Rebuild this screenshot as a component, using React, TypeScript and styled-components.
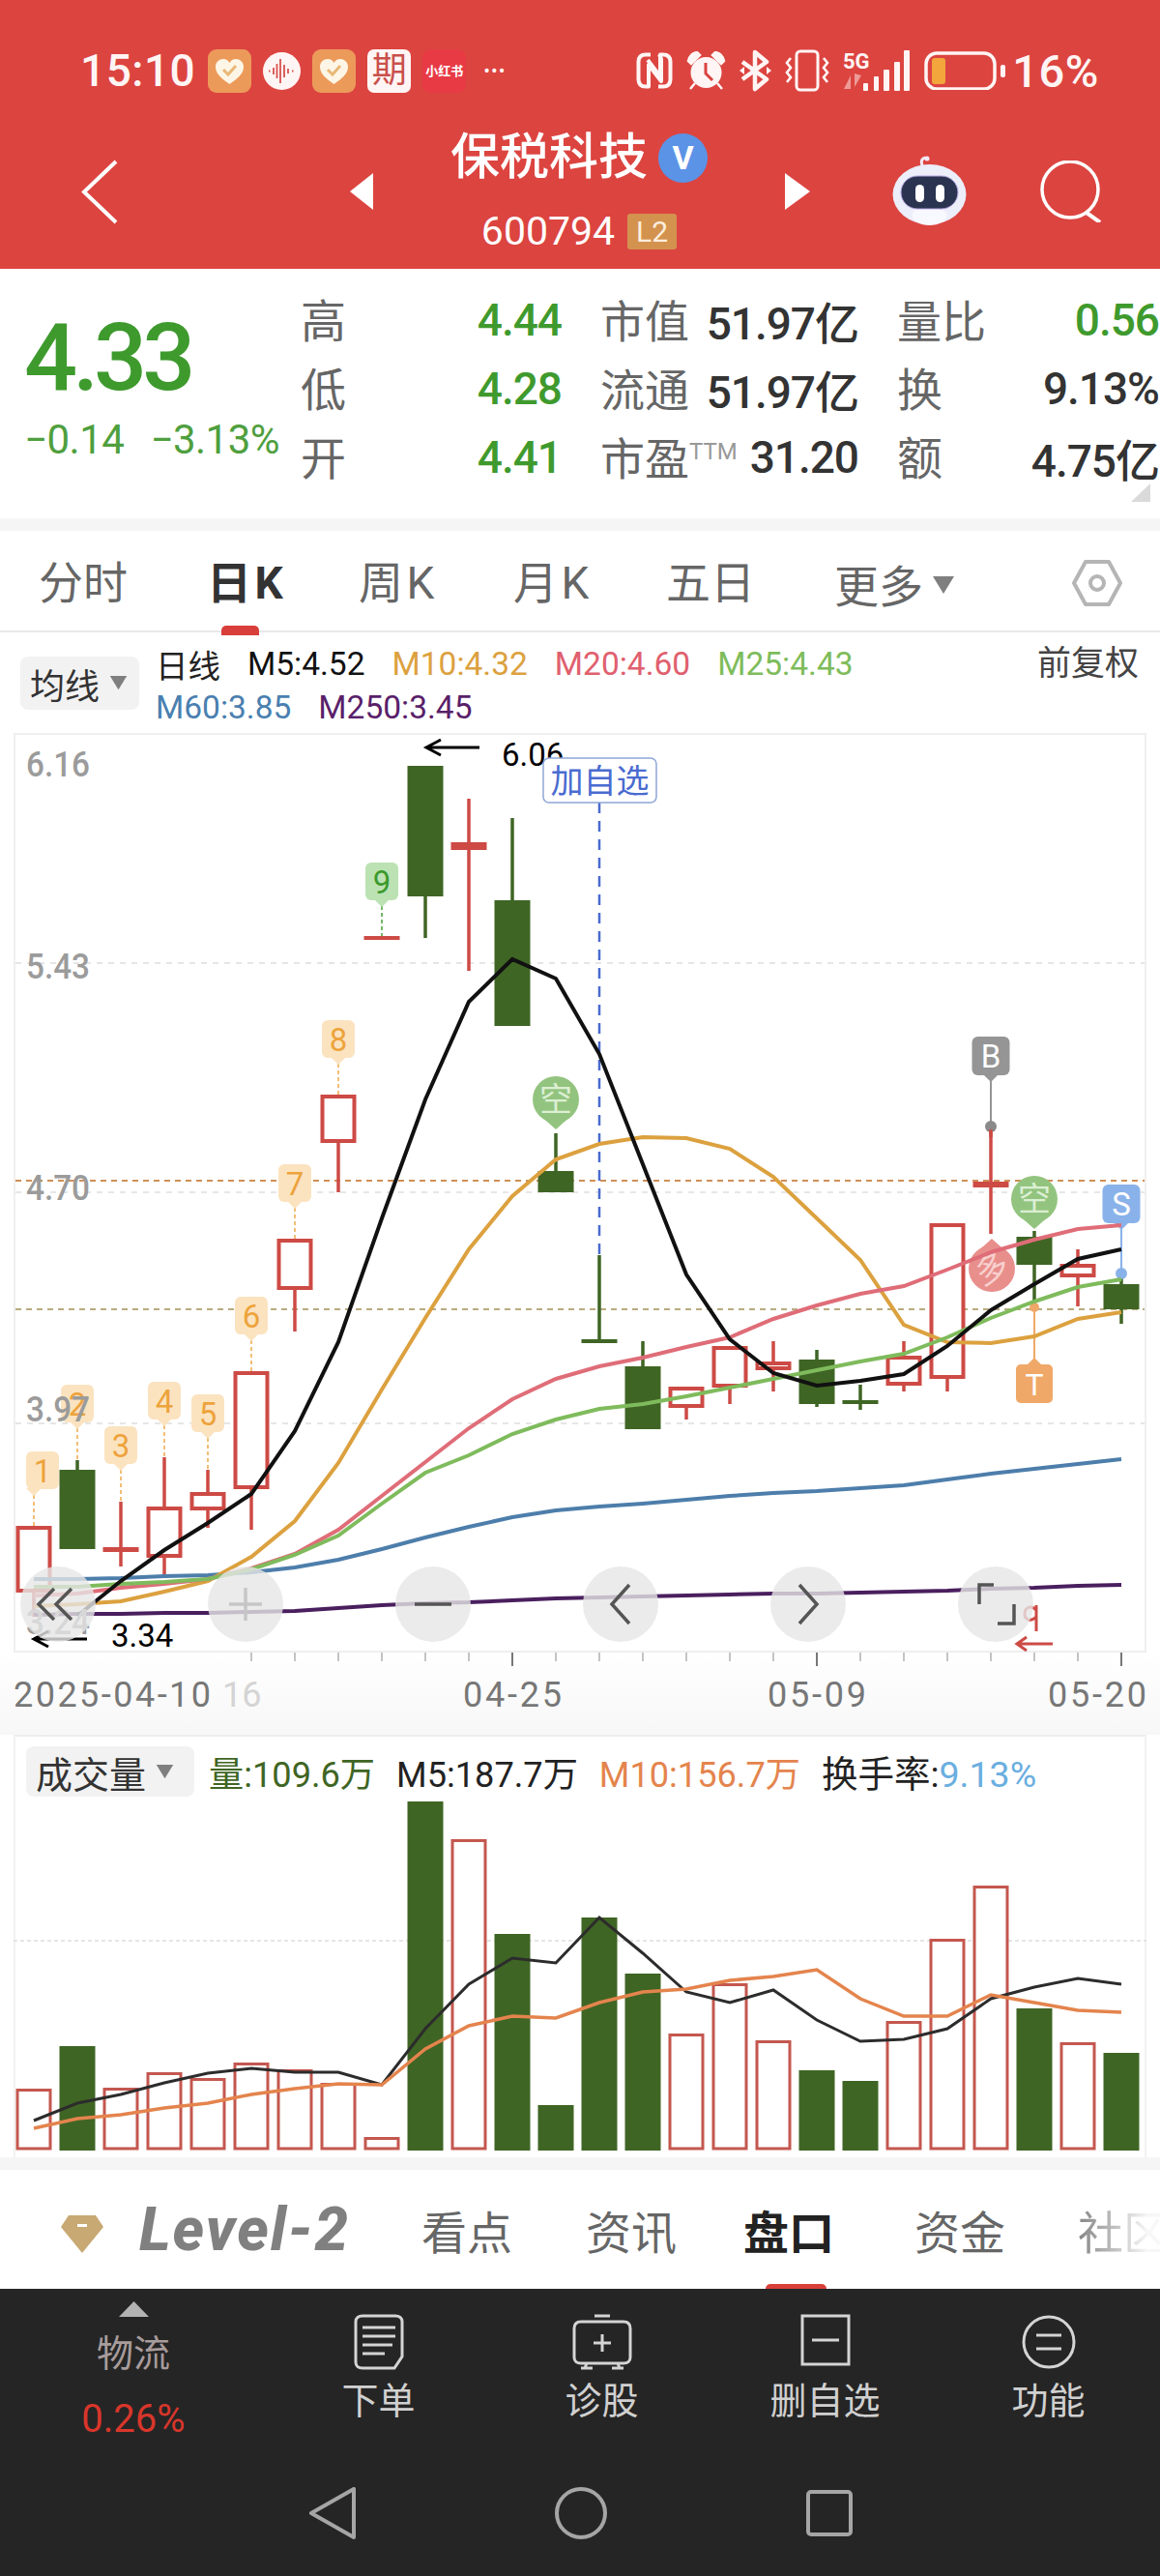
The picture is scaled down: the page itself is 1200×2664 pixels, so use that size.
import styled, { createGlobalStyle } from 'styled-components';

const GlobalStyle = createGlobalStyle`
  html, body { margin: 0; padding: 0; background: #fff; }
  body { font-family: Roboto, "Noto Sans CJK SC", sans-serif; }
  * { box-sizing: border-box; }
`;

const RED = '#cd4a45';
const GREEN = '#3f6524';
const TAG_FONT = 'Roboto, "Noto Sans CJK SC", sans-serif';

const xAt = (i: number) => 35 + 45 * i;
const toPoints = (ys: number[], from = 0) => ys.map((y, i) => `${xAt(i)},${y}`).slice(from).join(' ');

// top, bottom, high, low, rising
const candles: [number, number, number, number, boolean][] = [
  [1578, 1647, 1578, 1672, true],
  [1520, 1602, 1510, 1602, false],
  [1600, 1605, 1553, 1620, true],
  [1558, 1611, 1507, 1630, true],
  [1543, 1562, 1520, 1580, true],
  [1418, 1540, 1418, 1582, true],
  [1281, 1334, 1281, 1377, true],
  [1132, 1182, 1132, 1233, true],
  [968, 972, 968, 972, true],
  [792, 927, 792, 970, false],
  [871, 879, 826, 1004, true],
  [931, 1061, 846, 1061, false],
  [1211, 1233, 1172, 1233, false],
  [1385, 1389, 1298, 1389, false],
  [1413, 1478, 1387, 1478, false],
  [1434, 1456, 1434, 1468, true],
  [1392, 1435, 1392, 1452, true],
  [1408, 1417, 1387, 1439, true],
  [1406, 1452, 1396, 1455, false],
  [1448, 1452, 1432, 1458, false],
  [1402, 1433, 1387, 1439, true],
  [1265, 1426, 1265, 1439, true],
  [1222, 1228, 1165, 1276, true],
  [1279, 1308, 1273, 1352, false],
  [1307, 1321, 1292, 1351, true],
  [1328, 1354, 1318, 1369, false],
];

const ma5 = [1688, 1671, 1635, 1603, 1575, 1545, 1480, 1388, 1260, 1137, 1036, 992, 1012, 1090, 1204, 1318, 1385, 1420, 1433, 1428, 1421, 1392, 1355, 1328, 1302, 1292];
const ma10 = [1661, 1659, 1656, 1646, 1635, 1610, 1573, 1513, 1437, 1363, 1292, 1237, 1199, 1183, 1176, 1177, 1188, 1217, 1260, 1303, 1370, 1388, 1389, 1382, 1364, 1357];
const ma20 = [1650, 1648, 1642, 1638, 1633, 1622, 1607, 1582, 1547, 1512, 1477, 1447, 1426, 1413, 1404, 1393, 1383, 1364, 1350, 1338, 1330, 1313, 1295, 1282, 1271, 1267];
const ma25 = [1641, 1641, 1638, 1636, 1633, 1623, 1608, 1588, 1555, 1523, 1505, 1483, 1468, 1457, 1452, 1444, 1435, 1426, 1417, 1408, 1400, 1383, 1363, 1346, 1331, 1323];
const ma60 = [1633, 1633, 1632, 1630, 1629, 1626, 1621, 1613, 1602, 1590, 1579, 1569, 1562, 1558, 1555, 1551, 1547, 1544, 1542, 1539, 1536, 1530, 1524, 1519, 1514, 1509];
const ma250 = [1670, 1669, 1669, 1668, 1668, 1667, 1666, 1663, 1660, 1658, 1657, 1655, 1653, 1652, 1651, 1650, 1649, 1648, 1648, 1647, 1646, 1645, 1643, 1642, 1640, 1639];

const volTops = [2162, 2118, 2161, 2145, 2151, 2135, 2142, 2156, 2212, 1865, 1904, 2002, 2179, 1985, 2043, 2105, 2053, 2112, 2143, 2154, 2092, 2007, 1952, 2079, 2114, 2125];
const volM5 = [2195, 2177, 2168, 2156, 2146, 2141, 2145, 2145, 2158, 2100, 2054, 2027, 2032, 1985, 2022, 2062, 2073, 2060, 2091, 2113, 2111, 2100, 2069, 2057, 2048, 2054];
const volM10 = [2203, 2193, 2189, 2182, 2177, 2168, 2162, 2157, 2158, 2121, 2097, 2087, 2089, 2073, 2062, 2059, 2050, 2046, 2039, 2069, 2087, 2087, 2065, 2073, 2081, 2083];

// x of the marker tip, bubble centre, top of bubble, bottom of dashed stem
const orangeTags: [string, number, number, number, number][] = [
  ['1', 35, 44, 1501, 1578],
  ['2', 80, 80, 1432, 1510],
  ['3', 125, 125, 1475, 1553],
  ['4', 170, 170, 1429, 1507],
  ['5', 215, 215, 1442, 1520],
  ['6', 260, 260, 1341, 1418],
  ['7', 305, 305, 1204, 1281],
  ['8', 350, 350, 1055, 1132],
];

const Tag = ({ label, tip, cx, top, stem, bg, fg, w = 34, h = 39, solid = false }: { label: string; tip: number; cx: number; top: number; stem: number; bg: string; fg: string; w?: number; h?: number; solid?: boolean }) => (
  <g>
    <line x1={tip} x2={tip} y1={top + h + 6} y2={stem} stroke={solid ? bg : fg} strokeWidth={solid ? 2 : 1.4} strokeDasharray={solid ? undefined : '4 3'} />
    <rect x={cx - w / 2} y={top} width={w} height={h} rx={6} fill={bg} />
    <polygon points={`${tip - 8},${top + h - 1} ${tip + 8},${top + h - 1} ${tip},${top + h + 7}`} fill={bg} />
    <text x={cx} y={top + h / 2 + 12} textAnchor="middle" fontFamily={TAG_FONT} fontSize={33} fill={fg}>{label}</text>
  </g>
);

const Pin = ({ cx, cy, label, bg, fg, down = true, tilt = 0 }: { cx: number; cy: number; label: string; bg: string; fg: string; down?: boolean; tilt?: number }) => (
  <g>
    <polygon points={down ? `${cx - 18},${cy + 15} ${cx + 18},${cy + 15} ${cx},${cy + 31}` : `${cx - 18},${cy - 15} ${cx + 18},${cy - 15} ${cx},${cy - 31}`} fill={bg} />
    <circle cx={cx} cy={cy} r={24} fill={bg} />
    <text x={cx} y={cy + 12} textAnchor="middle" fontFamily={TAG_FONT} fontSize={34} fill={fg} transform={tilt ? `rotate(${tilt} ${cx} ${cy})` : undefined}>{label}</text>
  </g>
);

const AxisLabel = ({ y, children }: { y: number; children: string }) => (
  <text x={27} y={y} fontFamily={TAG_FONT} fontSize={36} fontWeight={500} fill="#9b9b9b" textLength={66} lengthAdjust="spacingAndGlyphs">{children}</text>
);

const CandleChart = () => (
  <ChartSvg viewBox="16 760 1168 947" width={1168} height={947}>
    {[996, 1233, 1472].map(y => (
      <line key={y} x1={16} x2={1184} y1={y} y2={y} stroke="#e6e6e6" strokeWidth={2} strokeDasharray="6 6" />
    ))}
    <line x1={16} x2={1184} y1={1221} y2={1221} stroke="#cf8f58" strokeWidth={2} strokeDasharray="6 5" />
    <line x1={16} x2={1184} y1={1354} y2={1354} stroke="#b9ab80" strokeWidth={2} strokeDasharray="6 5" />

    <line x1={620} x2={620} y1={830} y2={1298} stroke="#4a6bd0" strokeWidth={2.5} strokeDasharray="11 8" />

    {orangeTags.map(([label, tip, cx, top, stem]) => (
      <Tag key={label} label={label} tip={tip} cx={cx} top={top} stem={stem} bg="#fbe3c0" fg="#eda33c" />
    ))}
    <Tag label="9" tip={395} cx={395} top={892} stem={968} bg="#bce2b4" fg="#3c9a2c" />

    <Pin cx={1026} cy={1312} label="多" bg="#e88f8c" fg="#f8d0ce" down={false} tilt={-25} />

    {candles.map(([top, bot, hi, lo, up], i) => {
      const x = xAt(i);
      const color = up ? RED : GREEN;
      const doji = bot - top < 7;
      return (
        <g key={i}>
          <line x1={x} x2={x} y1={hi} y2={lo} stroke={color} strokeWidth={3.5} />
          {up && !doji ? (
            <rect x={x - 16.5} y={top + 2} width={33} height={Math.max(bot - top - 4, 1)} fill="#fff" stroke={color} strokeWidth={4} />
          ) : (
            <rect x={x - 18.5} y={top} width={37} height={bot - top} fill={color} />
          )}
        </g>
      );
    })}
    <rect x={483} y={875} width={4} height={4} fill={RED} />

    <Pin cx={575} cy={1137} label="空" bg="#93c47f" fg="#dcefd4" />
    <Pin cx={1070} cy={1240} label="空" bg="#93c47f" fg="#dcefd4" />

    <Tag label="B" tip={1025} cx={1025} top={1072} stem={1165} bg="#959595" fg="#fff" w={39} h={40} solid />
    <circle cx={1025} cy={1165} r={6} fill="#8a8a8a" />
    <line x1={1025} x2={1025} y1={1168} y2={1176} stroke={RED} strokeWidth={3.5} />

    <Tag label="S" tip={1160} cx={1160} top={1225} stem={1317} bg="#8ab2ea" fg="#fff" w={39} h={40} solid />
    <circle cx={1160} cy={1317} r={6} fill="#8ab2ea" />

    <line x1={1070} x2={1070} y1={1352} y2={1408} stroke="#f0a868" strokeWidth={2} />
    <circle cx={1070} cy={1352} r={5} fill="#f0a868" />
    <polygon points="1062,1412 1078,1412 1070,1404" fill="#f0a868" />
    <rect x={1051} y={1411} width={38} height={40} rx={5} fill="#f0a868" />
    <text x={1070} y={1443} textAnchor="middle" fontFamily={TAG_FONT} fontSize={32} fill="#fff">T</text>

    <polyline points={toPoints(ma250)} fill="none" stroke="#4a1f5e" strokeWidth={4} />
    <polyline points={toPoints(ma60)} fill="none" stroke="#4d7eab" strokeWidth={4} />
    <polyline points={toPoints(ma10)} fill="none" stroke="#dca13f" strokeWidth={4} />
    <polyline points={toPoints(ma20)} fill="none" stroke="#df6d78" strokeWidth={4} />
    <polyline points={toPoints(ma25)} fill="none" stroke="#7fbb5c" strokeWidth={4} />
    <polyline points={toPoints(ma5, 1)} fill="none" stroke="#111" strokeWidth={4} />

    <AxisLabel y={803}>6.16</AxisLabel>
    <AxisLabel y={1012}>5.43</AxisLabel>
    <AxisLabel y={1241}>4.70</AxisLabel>
    <AxisLabel y={1470}>3.97</AxisLabel>
    <AxisLabel y={1690}>3.24</AxisLabel>

    {/* high / low markers */}
    <path d="M496 773H442M456 765L441 773L456 781" fill="none" stroke="#000" strokeWidth={3} />
    <text x={519} y={792} fontFamily={TAG_FONT} fontSize={33} fill="#000">6.06</text>
    <path d="M90 1695H36M50 1687L35 1695L50 1703" fill="none" stroke="#000" strokeWidth={3} />
    <text x={115} y={1703} fontFamily={TAG_FONT} fontSize={33} fill="#000">3.34</text>

    {/* add-to-watchlist flag */}
    <rect x={562} y={784} width={117} height={46} rx={6} fill="#fff" stroke="#8fa6d8" strokeWidth={1.5} />
    <text x={620.5} y={820} textAnchor="middle" fontFamily={TAG_FONT} fontSize={34} fill="#4a6bd0">加自选</text>

    <path d="M1072 1660V1687M1072 1665C1066 1659 1060 1663 1060 1669C1060 1675 1066 1678 1072 1672" fill="none" stroke={RED} strokeWidth={3} />
    <path d="M1089 1700H1053M1062 1693L1052 1700L1062 1707" fill="none" stroke={RED} strokeWidth={3} />
  </ChartSvg>
);

const DateAxis = () => (
  <AxisSvg viewBox="0 1711 1200 85" width={1200} height={85}>
    {candles.map((_, i) =>
      i >= 5 ? (
        <line key={i} x1={xAt(i)} x2={xAt(i)} y1={1711} y2={[11, 18, 25].includes(i) ? 1725 : 1720} stroke={[11, 18, 25].includes(i) ? '#777' : '#c4c4c4'} strokeWidth={2} />
      ) : null
    )}
    <text x={14} y={1767} fontFamily={TAG_FONT} fontSize={36} fill="#777" textLength={204}>2025-04-10</text>
    <text x={230} y={1767} fontFamily={TAG_FONT} fontSize={36} fill="#d4d4d4">16</text>
    <text x={479} y={1767} fontFamily={TAG_FONT} fontSize={36} fill="#777" textLength={102}>04-25</text>
    <text x={794} y={1767} fontFamily={TAG_FONT} fontSize={36} fill="#777" textLength={102}>05-09</text>
    <text x={1084} y={1767} fontFamily={TAG_FONT} fontSize={36} fill="#777" textLength={102}>05-20</text>
  </AxisSvg>
);

const VolumeChart = () => (
  <VolumeSvg viewBox="14 1860 1172 371" width={1172} height={371}>
    <line x1={14} x2={1186} y1={2009} y2={2009} stroke="#dedede" strokeWidth={1.5} strokeDasharray="4 3" />
    {volTops.map((top, i) => {
      const up = candles[i][4];
      const x = xAt(i);
      return up ? (
        <rect key={i} x={x - 17} y={top + 1.5} width={34} height={2224 - top - 1.5} fill="#fff" stroke="#c4574f" strokeWidth={3} />
      ) : (
        <rect key={i} x={x - 18.5} y={top} width={37} height={2226 - top} fill={GREEN} />
      );
    })}
    <polyline points={toPoints(volM5)} fill="none" stroke="#2c2c2c" strokeWidth={3} />
    <polyline points={toPoints(volM10)} fill="none" stroke="#e4844d" strokeWidth={3.5} />
  </VolumeSvg>
);

const HeartIcon = () => (
  <svg width={45} height={45} viewBox="0 0 45 45">
    <rect width={45} height={45} rx={9} fill="#ec9a5a" />
    <path d="M22.5 36C14 30 8 25 8 18C8 13 12 10 16 10C19 10 21 11.500 22.500 14C24 11.500 26 10 29 10C33 10 37 13 37 18C37 25 31 30 22.500 36Z" fill="#fdf6e6" />
    <path d="M16 21L21 26L29 17" fill="none" stroke="#e9b877" strokeWidth={3} />
  </svg>
);

const WaveIcon = () => (
  <svg width={39} height={39} viewBox="0 0 39 39">
    <circle cx={19.500} cy={19.500} r={19.500} fill="#fff5f4" />
    <path d="M6 19.500H7.500M11 16V23M14.500 12V27M18 7V32M22 13V26M26 17V22M30 19.500H31.500" stroke="#d9534f" strokeWidth={1.8} />
  </svg>
);

const NfcIcon = () => (
  <svg width={38} height={38} viewBox="0 0 38 38">
    <path d="M15 2.500H10C5 2.500 2.500 5 2.500 10V28C2.500 33 5 35.500 10 35.500H13V13L26 30V7L24 2.500M23 35.500H28C33 35.500 35.500 33 35.500 28V10C35.500 5 33 2.500 28 2.500H25V25L12 8" fill="none" stroke="#fff5f4" strokeWidth={4} strokeLinejoin="round" />
  </svg>
);

const AlarmIcon = () => (
  <svg width={41} height={41} viewBox="0 0 41 41">
    <circle cx={20.500} cy={22} r={16} fill="#fff5f4" />
    <path d="M2 10C3 5 6 2 11 1L14 4L5 13ZM39 10C38 5 35 2 30 1L27 4L36 13ZM9 33L4 39M32 33L37 39" fill="#fff5f4" stroke="#fff5f4" strokeWidth={2.500} />
    <path d="M20 12V23L27 30" fill="none" stroke="#d9433f" strokeWidth={3} />
  </svg>
);

const BluetoothIcon = () => (
  <svg width={33} height={44} viewBox="0 0 33 44">
    <path d="M3 13L28 31L16 41V3L28 13L3 31" fill="none" stroke="#fff5f4" strokeWidth={4.500} strokeLinejoin="round" />
    <path d="M0 22L5 18V26ZM33 22L28 18V26Z" fill="#fff5f4" />
  </svg>
);

const VibrateIcon = () => (
  <svg width={46} height={44} viewBox="0 0 46 44">
    <rect x={12} y={2} width={22} height={40} rx={4} fill="none" stroke="#fff5f4" strokeWidth={3} />
    <path d="M6 9L2 14L6 19L2 24L6 29L2 34M40 9L44 14L40 19L44 24L40 29L44 34" fill="none" stroke="#fff5f4" strokeWidth={2.600} />
  </svg>
);

const SignalIcon = () => (
  <svg width={70} height={42} viewBox="0 0 70 42">
    <text x={0} y={19} fontFamily={TAG_FONT} fontSize={22} fontWeight={700} fill="#fff5f4">5G</text>
    <path d="M8 40V26L1 40ZM12 24V38L19 26Z" fill="#ee9a96" />
    <rect x={21} y={34} width={5} height={8} rx={1} fill="#fff5f4" />
    <rect x={32} y={27} width={5} height={15} rx={1} fill="#fff5f4" />
    <rect x={42} y={20} width={6} height={22} rx={1} fill="#fff5f4" />
    <rect x={53} y={12} width={6} height={30} rx={1} fill="#fff5f4" />
    <rect x={63} y={0} width={6} height={42} rx={1} fill="#fff5f4" />
  </svg>
);

const BatteryIcon = () => (
  <svg width={84} height={40} viewBox="0 0 84 40">
    <rect x={2} y={2} width={71} height={37} rx={11} fill="none" stroke="#fff5f4" strokeWidth={3.500} />
    <rect x={8} y={7} width={14} height={27} rx={3} fill="#f2a63b" />
    <rect x={79} y={14} width={5} height={13} rx={2} fill="#fff5f4" />
  </svg>
);

const RobotIcon = () => (
  <svg width={79} height={74} viewBox="0 0 79 74">
    <path d="M33 12C29 5 33 1 37 3" fill="none" stroke="#f3e9f5" strokeWidth={3} />
    <circle cx={37} cy={3} r={2.500} fill="#f3e9f5" />
    <ellipse cx={39.500} cy={40} rx={38} ry={31} fill="#eceefa" />
    <ellipse cx={39.500} cy={62} rx={18} ry={10} fill="#f8f8ff" />
    <rect x={10} y={21} width={59} height={34} rx={17} fill="#2a3450" stroke="#b9a7e4" strokeWidth={1} />
    <rect x={25} y={30} width={9} height={18} rx={4.500} fill="#fff" />
    <rect x={46} y={30} width={9} height={18} rx={4.500} fill="#fff" />
  </svg>
);

const GemIcon = () => (
  <svg width={44} height={39} viewBox="0 0 44 39">
    <polygon points="8,0 36,0 44,12 22,39 0,12" fill="#c8a873" />
    <rect x={17} y={9} width={10} height={3} fill="#fff" />
  </svg>
);

const DownArrow = ({ size = 24 }: { size?: number }) => (
  <svg width={size} height={size * 0.75} viewBox="0 0 24 18"><polygon points="1,0 23,0 12,18" fill="#7f7f7f" /></svg>
);

const overlayIcons = [
  'M26 14L10 30L26 46M44 14L28 30L44 46',
  'M30 13V47M13 30H47',
  'M11 30H49',
  'M39 10L21 30L39 50',
  'M21 10L39 30L21 50',
  'M13 30V10H28M32 50H49V30',
];

const App = () => (
  <Page>
    <GlobalStyle />
    <Header>
      <StatusBar>
        <Clock>15:10</Clock>
        <NotifyIcons>
          <HeartIcon />
          <WaveIcon />
          <HeartIcon />
          <QiBadge>期</QiBadge>
          <XhsBadge>小红书</XhsBadge>
          <MoreDots>•••</MoreDots>
        </NotifyIcons>
        <SystemIcons>
          <NfcIcon />
          <AlarmIcon />
          <BluetoothIcon />
          <VibrateIcon />
          <SignalIcon />
          <BatteryIcon />
          <BatteryText>16%</BatteryText>
        </SystemIcons>
      </StatusBar>
      <NavRow>
        <svg width={38} height={67} viewBox="0 0 38 67"><path d="M36 2L3 33.500L36 65" fill="none" stroke="#fff" strokeWidth={4} /></svg>
        <svg width={24} height={38} viewBox="0 0 24 38"><polygon points="24,0 24,38 0,19" fill="#fff" /></svg>
        <TitleBlock>
          <TitleRow>
            <StockName>保税科技</StockName>
            <VBadge>V</VBadge>
          </TitleRow>
          <CodeRow>
            <StockCode>600794</StockCode>
            <LevelChip>L2</LevelChip>
          </CodeRow>
        </TitleBlock>
        <svg width={26} height={38} viewBox="0 0 26 38"><polygon points="0,0 0,38 26,19" fill="#fff" /></svg>
        <RobotIcon />
        <svg width={65} height={64} viewBox="0 0 65 64"><circle cx={32} cy={30} r={29} fill="none" stroke="#fff" strokeWidth={3.500} /><path d="M49 54L63 64" stroke="#fff" strokeWidth={4} /></svg>
      </NavRow>
    </Header>

    <QuoteBlock>
      <PriceBlock>
        <BigPrice>4.33</BigPrice>
        <PriceChange>
          <span>−0.14</span>
          <span>−3.13%</span>
        </PriceChange>
      </PriceBlock>
      <QuoteGrid>
        <QuoteCell><QuoteLabel>高</QuoteLabel><QuoteValue $green>4.44</QuoteValue></QuoteCell>
        <QuoteCell><QuoteLabel $narrow>市值</QuoteLabel><QuoteValue>51.97亿</QuoteValue></QuoteCell>
        <QuoteCell><QuoteLabel $narrow>量比</QuoteLabel><QuoteValue $green>0.56</QuoteValue></QuoteCell>
        <QuoteCell><QuoteLabel>低</QuoteLabel><QuoteValue $green>4.28</QuoteValue></QuoteCell>
        <QuoteCell><QuoteLabel $narrow>流通</QuoteLabel><QuoteValue>51.97亿</QuoteValue></QuoteCell>
        <QuoteCell><QuoteLabel>换</QuoteLabel><QuoteValue>9.13%</QuoteValue></QuoteCell>
        <QuoteCell><QuoteLabel>开</QuoteLabel><QuoteValue $green>4.41</QuoteValue></QuoteCell>
        <QuoteCell><QuoteLabel $narrow>市盈<TtmMark>TTM</TtmMark></QuoteLabel><QuoteValue>31.20</QuoteValue></QuoteCell>
        <QuoteCell><QuoteLabel>额</QuoteLabel><QuoteValue>4.75亿</QuoteValue></QuoteCell>
      </QuoteGrid>
      <CornerMark />
    </QuoteBlock>
    <SectionGap $h={13} />

    <PeriodTabs>
      <PeriodTab>分时</PeriodTab>
      <PeriodTab $active>日 K</PeriodTab>
      <PeriodTab>周 K</PeriodTab>
      <PeriodTab>月 K</PeriodTab>
      <PeriodTab>五日</PeriodTab>
      <PeriodTab>更多<MoreArrow><DownArrow /></MoreArrow></PeriodTab>
      <svg width={52} height={50} viewBox="0 0 52 50">
        <polygon points="14,3 38,3 50,25 38,47 14,47 2,25" fill="none" stroke="#b5b5b5" strokeWidth={4} strokeLinejoin="round" />
        <circle cx={26} cy={25} r={7} fill="none" stroke="#b5b5b5" strokeWidth={4} />
      </svg>
    </PeriodTabs>

    <LegendRow>
      <IndicatorChip $w={123} $h={55}>均线<DownArrow size={19} /></IndicatorChip>
      <LegendLines>
        <LegendLine>
          <LegendItem $color="#222">日线</LegendItem>
          <LegendItem $color="#111">M5:4.52</LegendItem>
          <LegendItem $color="#dca13f">M10:4.32</LegendItem>
          <LegendItem $color="#e0606e">M20:4.60</LegendItem>
          <LegendItem $color="#7ebc5a">M25:4.43</LegendItem>
        </LegendLine>
        <LegendLine>
          <LegendItem $color="#4a7fb0">M60:3.85</LegendItem>
          <LegendItem $color="#5a1f6a">M250:3.45</LegendItem>
        </LegendLine>
      </LegendLines>
      <AdjustLabel>前复权</AdjustLabel>
    </LegendRow>

    <ChartPanel>
      <CandleChart />
      <OverlayButtons>
        {overlayIcons.map((d, i) => (
          <OverlayButton key={i}>
            <svg width={60} height={60} viewBox="0 0 60 60"><path d={d} fill="none" stroke={i === 1 ? '#c6c6c6' : '#555'} strokeWidth={3.500} /></svg>
          </OverlayButton>
        ))}
      </OverlayButtons>
    </ChartPanel>

    <AxisStrip>
      <DateAxis />
    </AxisStrip>

    <VolumePanel>
      <VolumeLegend>
        <IndicatorChip $w={174} $h={52} $size={38}>成交量<DownArrow size={19} /></IndicatorChip>
        <LegendItem $color={GREEN} $size={36.2}>量:109.6万</LegendItem>
        <LegendItem $color="#222" $size={36.2}>M5:187.7万</LegendItem>
        <LegendItem $color="#e4844d" $size={36.2}>M10:156.7万</LegendItem>
        <LegendItem $color="#222" $size={37.5}>换手率:<TurnoverValue>9.13%</TurnoverValue></LegendItem>
      </VolumeLegend>
      <VolumeChart />
    </VolumePanel>
    <SectionGap $h={13} />

    <InfoTabs>
      <GemIcon />
      <LevelLogo>Level-2</LevelLogo>
      <InfoTab>看点</InfoTab>
      <InfoTab>资讯</InfoTab>
      <InfoTab $active>盘口</InfoTab>
      <InfoTab>资金</InfoTab>
      <InfoTab $faded>社区</InfoTab>
    </InfoTabs>

    <BottomBar>
      <ActionRow>
        <RelatedCell>
          <svg width={31} height={16} viewBox="0 0 31 16"><polygon points="15.500,0 31,16 0,16" fill="#b3b3b3" /></svg>
          <RelatedName>物流</RelatedName>
          <RelatedRate>0.26%</RelatedRate>
        </RelatedCell>
        <ActionCell>
          <svg width={52} height={58} viewBox="0 0 52 58">
            <path d="M9 2H43C47 2 50 4 50 8V44L42 56H9C5 56 2 54 2 50V8C2 4 5 2 9 2Z" fill="none" stroke="#d4d4d4" strokeWidth={3} />
            <path d="M9 14H43M9 23H43M9 32H40M9 41H32" stroke="#d4d4d4" strokeWidth={3} />
          </svg>
          <ActionLabel>下单</ActionLabel>
        </ActionCell>
        <ActionCell>
          <svg width={62} height={58} viewBox="0 0 62 58">
            <path d="M23 2H39M9 8H53C57 8 60 10 60 15V45C60 49 57 51 53 51H9C5 51 2 49 2 45V15C2 10 5 8 9 8ZM13 56L15 51M49 56L47 51M9 56H21M41 56H53" fill="none" stroke="#d4d4d4" strokeWidth={3} />
            <path d="M31 21V39M22 30H40" stroke="#d4d4d4" strokeWidth={3} />
          </svg>
          <ActionLabel>诊股</ActionLabel>
        </ActionCell>
        <ActionCell>
          <svg width={52} height={58} viewBox="0 0 52 58">
            <rect x={2} y={2} width={48} height={50} fill="none" stroke="#d4d4d4" strokeWidth={3} />
            <path d="M12 27H40" stroke="#d4d4d4" strokeWidth={3} />
          </svg>
          <ActionLabel>删自选</ActionLabel>
        </ActionCell>
        <ActionCell>
          <svg width={56} height={58} viewBox="0 0 56 58">
            <circle cx={28} cy={29} r={26} fill="none" stroke="#d4d4d4" strokeWidth={3} />
            <path d="M15 22H41M15 36H41" stroke="#d4d4d4" strokeWidth={3} />
          </svg>
          <ActionLabel>功能</ActionLabel>
        </ActionCell>
      </ActionRow>
      <SystemNav>
        <svg width={48} height={54} viewBox="0 0 48 54"><polygon points="46,2 46,52 2,27" fill="none" stroke="#a5a5a5" strokeWidth={4} strokeLinejoin="round" /></svg>
        <svg width={54} height={54} viewBox="0 0 54 54"><circle cx={27} cy={27} r={25} fill="none" stroke="#a5a5a5" strokeWidth={4} /></svg>
        <svg width={48} height={48} viewBox="0 0 48 48"><rect x={2} y={2} width={44} height={44} rx={3} fill="none" stroke="#a5a5a5" strokeWidth={4} /></svg>
      </SystemNav>
    </BottomBar>
  </Page>
);

const Page = styled.div`
  width: 1200px;
  height: 2664px;
  overflow: hidden;
  background: #fff;
  display: flex;
  flex-direction: column;
`;

const Header = styled.header`
  height: 278px;
  flex: none;
  background: #dc4440;
  color: #fff;
  display: flex;
  flex-direction: column;
`;

const StatusBar = styled.div`
  height: 146px;
  flex: none;
  padding-left: 83px;
  display: flex;
  align-items: center;
`;

const Clock = styled.span`
  font-size: 46px;
  font-weight: 500;
  line-height: 1;
  color: #fff5f4;
  letter-spacing: 0.5px;
`;

const BatteryText = styled(Clock)`
  margin-left: -7px;
  font-size: 47px;
`;

const NotifyIcons = styled.div`
  margin-left: 13px;
  width: 320px;
  display: flex;
  align-items: center;
  gap: 12px;
`;

const QiBadge = styled.span`
  width: 45px;
  height: 45px;
  border-radius: 7px;
  background: #fff5f4;
  color: #c9504c;
  font-size: 36px;
  line-height: 45px;
  text-align: center;
`;

const XhsBadge = styled.span`
  width: 45px;
  height: 45px;
  border-radius: 9px;
  background: #e83a45;
  color: #fff;
  font-size: 13px;
  font-weight: 700;
  line-height: 45px;
  text-align: center;
  white-space: nowrap;
`;

const MoreDots = styled.span`
  margin-left: 6px;
  font-size: 20px;
  letter-spacing: 1px;
  color: #fff5f4;
`;

const SystemIcons = styled.div`
  margin-left: 123px;
  display: flex;
  align-items: center;
  gap: 14px;
`;

const NavRow = styled.div`
  display: grid;
  grid-template-columns: 278px 24px 426px 110px 153px 65px;
  margin-top: -9px;
  padding-left: 84px;
  align-items: center;
  height: 122px;
  flex: none;
`;

const TitleBlock = styled.div`
  display: flex;
  flex-direction: column;
  align-items: center;
`;

const TitleRow = styled.div`
  height: 52px;
  display: flex;
  align-items: center;
  gap: 11px;
`;

const StockName = styled.span`
  font-size: 51px;
  line-height: 52px;
  font-weight: 500;
`;

const VBadge = styled.span`
  width: 51px;
  height: 51px;
  border-radius: 50%;
  background: #5b93e6;
  font-size: 34px;
  font-weight: 700;
  line-height: 51px;
  text-align: center;
`;

const CodeRow = styled.div`
  margin-top: 30px;
  height: 40px;
  display: flex;
  align-items: center;
  gap: 13px;
`;

const StockCode = styled.span`
  font-size: 41px;
  line-height: 40px;
`;

const LevelChip = styled.span`
  width: 51px;
  height: 37px;
  border-radius: 3px;
  background: #d4924f;
  color: #fbeedd;
  font-size: 30px;
  line-height: 37px;
  text-align: center;
`;

const QuoteBlock = styled.section`
  position: relative;
  height: 258px;
  flex: none;
  display: flex;
`;

const PriceBlock = styled.div`
  width: 312px;
  padding: 43px 0 0 25px;
  color: #3f9a2e;
`;

const BigPrice = styled.div`
  font-size: 97px;
  font-weight: 500;
  line-height: 98px;
  letter-spacing: -5px;
`;

const PriceChange = styled.div`
  margin-top: 12px;
  display: flex;
  gap: 27px;
  font-size: 42px;
  line-height: 48px;
  letter-spacing: -0.5px;
  color: #4f9f3e;
  white-space: nowrap;
`;

const QuoteGrid = styled.div`
  padding-top: 17px;
  display: grid;
  grid-template-columns: 269px 266px 270px;
  grid-auto-rows: 71px;
  column-gap: 41px;
  flex: none;
`;

const QuoteCell = styled.div`
  display: flex;
  align-items: center;
  justify-content: space-between;
  white-space: nowrap;
`;

const QuoteLabel = styled.span<{ $narrow?: boolean }>`
  font-size: ${p => (p.$narrow ? 46 : 47)}px;
  color: #666;
  margin: 0 0 4px -1px;
`;

const TtmMark = styled.sup`
  font-size: 24px;
  color: #999;
  line-height: 0;
  vertical-align: 16px;
`;

const QuoteValue = styled.span<{ $green?: boolean }>`
  font-size: 46px;
  font-weight: 500;
  letter-spacing: -1px;
  color: ${p => (p.$green ? '#3f9a2e' : '#333')};
`;

const CornerMark = styled.div`
  position: absolute;
  right: 10px;
  bottom: 17px;
  width: 0;
  height: 0;
  border-left: 20px solid transparent;
  border-bottom: 19px solid #dadada;
`;

const SectionGap = styled.div<{ $h: number }>`
  height: ${p => p.$h}px;
  flex: none;
  background: #f5f5f5;
`;

const PeriodTabs = styled.nav`
  height: 105px;
  flex: none;
  padding-left: 40px;
  display: grid;
  grid-template-columns: 174px 157px 160px 158px 174px 246px 52px;
  align-items: center;
  border-bottom: 2px solid #e8e8e8;

  & > svg {
    margin-top: -5px;
  }
`;

const PeriodTab = styled.span<{ $active?: boolean }>`
  position: relative;
  font-size: 46px;
  line-height: 99px;
  padding-bottom: 4px;
  word-spacing: -8px;
  font-weight: ${p => (p.$active ? 700 : 400)};
  color: ${p => (p.$active ? '#333' : '#666')};
  white-space: nowrap;

  ${p => p.$active && `
    &::after {
      content: '';
      position: absolute;
      left: 15px;
      bottom: 0;
      width: 39px;
      height: 10px;
      border-radius: 5px 5px 0 0;
      background: #d93f3a;
    }
  `}
`;

const MoreArrow = styled.span`
  margin-left: 9px;
  vertical-align: 9px;
`;

const LegendRow = styled.div`
  height: 104px;
  flex: none;
  padding: 10px 22px 0 21px;
  display: flex;
  align-items: flex-start;
  gap: 17px;
`;

const IndicatorChip = styled.span<{ $w: number; $h: number; $size?: number }>`
  flex: none;
  width: ${p => p.$w}px;
  height: ${p => p.$h}px;
  margin-top: 15px;
  padding-left: 10px;
  border-radius: 8px;
  background: #f2f2f2;
  color: #333;
  font-size: ${p => p.$size ?? 36}px;
  display: flex;
  align-items: center;
  gap: 10px;
`;

const LegendLines = styled.div`
  display: flex;
  flex-direction: column;
  width: 800px;
`;

const LegendLine = styled.div`
  height: 45px;
  display: flex;
  align-items: center;
  gap: 28px;
`;

const LegendItem = styled.span<{ $color: string; $size?: number }>`
  font-size: ${p => p.$size ?? 33.5}px;
  color: ${p => p.$color};
  white-space: nowrap;
`;

const TurnoverValue = styled.span`
  color: #6aaee0;
`;

const AdjustLabel = styled.span`
  margin-left: auto;
  font-size: 35px;
  line-height: 45px;
  color: #444;
  white-space: nowrap;
`;

const ChartPanel = styled.div`
  position: relative;
  flex: none;
  margin-left: 14px;
  width: 1172px;
  height: 951px;
  border: 2px solid #efefef;
`;

const ChartSvg = styled.svg`
  display: block;
  overflow: visible;
`;

const OverlayButtons = styled.div`
  position: absolute;
  left: 5px;
  top: 860px;
  display: flex;
  gap: 116px;
`;

const OverlayButton = styled.div`
  width: 78px;
  height: 78px;
  border-radius: 50%;
  background: rgba(230, 230, 230, 0.8);
  display: flex;
  align-items: center;
  justify-content: center;
`;

const AxisStrip = styled.div`
  height: 85px;
  flex: none;
  background: linear-gradient(#fff, #f7f7f7);
`;

const AxisSvg = styled.svg`
  display: block;
`;

const VolumePanel = styled.div`
  flex: none;
  margin-left: 14px;
  width: 1172px;
  height: 437px;
  border-top: 2px solid #ececec;
  border-left: 2px solid #f2f2f2;
  border-right: 2px solid #f2f2f2;
  display: flex;
  flex-direction: column;
`;

const VolumeLegend = styled.div`
  height: 62px;
  flex: none;
  padding-left: 11px;
  display: flex;
  align-items: center;
  gap: 22px;

  & > :first-child {
    margin: 10px -7px 0 0;
  }
  & > :not(:first-child) {
    margin-top: 9px;
  }
`;

const VolumeSvg = styled.svg`
  display: block;
  margin-left: -2px;
`;

const InfoTabs = styled.nav`
  height: 123px;
  flex: none;
  padding: 9px 0 0 63px;
  display: grid;
  grid-template-columns: 81px 292px 170px 163px 177px 169px 85px;
  align-items: center;
  overflow: hidden;
`;

const LevelLogo = styled.span`
  font-size: 62px;
  font-weight: 800;
  font-style: italic;
  letter-spacing: 2px;
  line-height: 1;
  margin-top: -8px;
  color: #808080;
`;

const InfoTab = styled.span<{ $active?: boolean; $faded?: boolean }>`
  position: relative;
  font-size: 47px;
  line-height: 114px;
  white-space: nowrap;
  font-weight: ${p => (p.$active ? 700 : 400)};
  color: ${p => (p.$active ? '#222' : '#666')};

  ${p => p.$active && `
    &::after {
      content: '';
      position: absolute;
      left: 23px;
      bottom: 0;
      width: 63px;
      height: 5px;
      border-radius: 5px 5px 0 0;
      background: #d93f3a;
    }
  `}
  ${p => p.$faded && `
    -webkit-mask-image: linear-gradient(90deg, rgba(0,0,0,0.8), rgba(0,0,0,0.05) 85%);
    mask-image: linear-gradient(90deg, rgba(0,0,0,0.8), rgba(0,0,0,0.05) 85%);
  `}
`;

const BottomBar = styled.footer`
  flex: 1;
  background: #252525;
  display: flex;
  flex-direction: column;
`;

const ActionRow = styled.div`
  height: 180px;
  display: grid;
  grid-template-columns: 276px repeat(4, 231px);
`;

const ActionCell = styled.div`
  padding-top: 26px;
  display: flex;
  flex-direction: column;
  align-items: center;
`;

const ActionLabel = styled.span`
  margin-top: 9px;
  font-size: 38px;
  line-height: 46px;
  color: #d0d0d0;
`;

const RelatedCell = styled.div`
  padding-top: 13px;
  display: flex;
  flex-direction: column;
  align-items: center;
`;

const RelatedName = styled.span`
  margin-top: 15px;
  font-size: 38px;
  line-height: 46px;
  color: #a89c9c;
`;

const RelatedRate = styled.span`
  margin-top: 22px;
  font-size: 40px;
  line-height: 46px;
  color: #d9362b;
`;

const SystemNav = styled.div`
  padding: 25px 0 0 320px;
  display: flex;
  align-items: center;
  gap: 206px;
`;

export default App;
